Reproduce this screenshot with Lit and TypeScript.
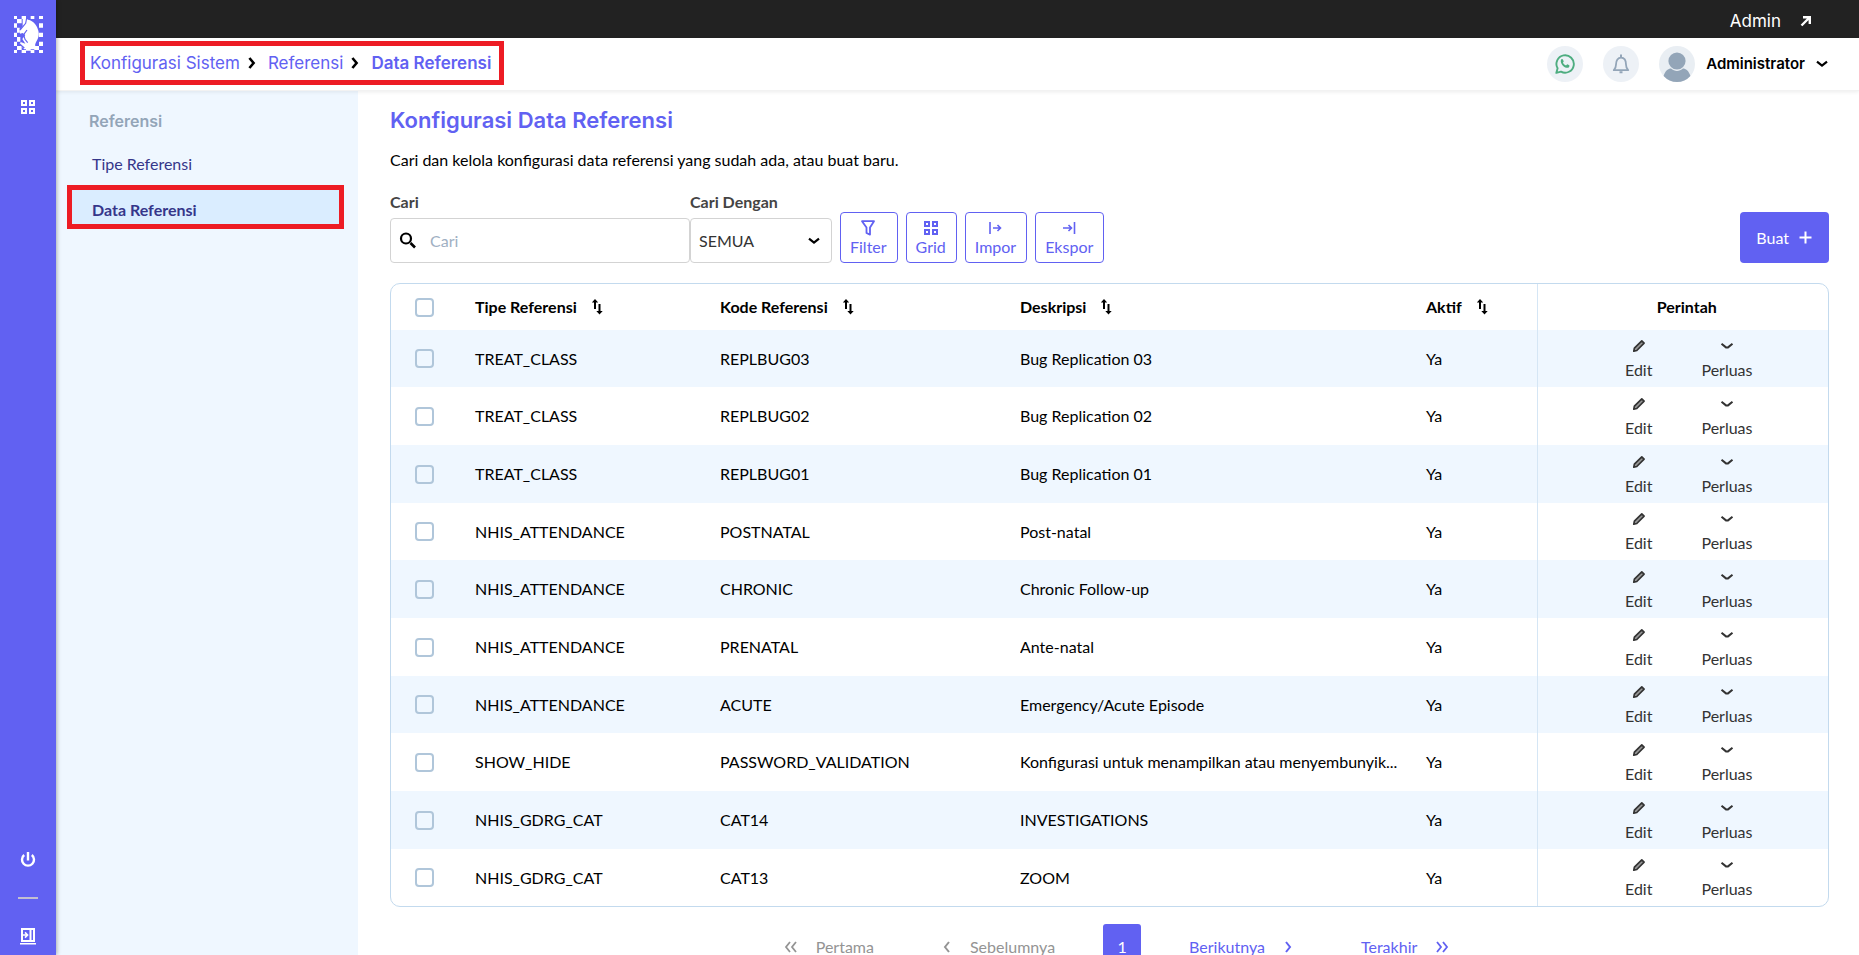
import { LitElement, html, css, svg } from "lit";
import { customElement, state } from "lit/decorators.js";

interface Reference {
  type: string;
  code: string;
  description: string;
  active: string;
}

const REFERENCES: Reference[] = [
  { type: "TREAT_CLASS", code: "REPLBUG03", description: "Bug Replication 03", active: "Ya" },
  { type: "TREAT_CLASS", code: "REPLBUG02", description: "Bug Replication 02", active: "Ya" },
  { type: "TREAT_CLASS", code: "REPLBUG01", description: "Bug Replication 01", active: "Ya" },
  { type: "NHIS_ATTENDANCE", code: "POSTNATAL", description: "Post-natal", active: "Ya" },
  { type: "NHIS_ATTENDANCE", code: "CHRONIC", description: "Chronic Follow-up", active: "Ya" },
  { type: "NHIS_ATTENDANCE", code: "PRENATAL", description: "Ante-natal", active: "Ya" },
  { type: "NHIS_ATTENDANCE", code: "ACUTE", description: "Emergency/Acute Episode", active: "Ya" },
  {
    type: "SHOW_HIDE",
    code: "PASSWORD_VALIDATION",
    description: "Konfigurasi untuk menampilkan atau menyembunyik...",
    active: "Ya",
  },
  { type: "NHIS_GDRG_CAT", code: "CAT14", description: "INVESTIGATIONS", active: "Ya" },
  { type: "NHIS_GDRG_CAT", code: "CAT13", description: "ZOOM", active: "Ya" },
];

const icon = (width: number, height: number, body: unknown) =>
  html`<svg class="icon" width=${width} height=${height} viewBox="0 0 ${width} ${height}" fill="none" stroke="currentColor" aria-hidden="true">${body}</svg>`;

const gridIcon = () =>
  icon(16, 16, svg`<path stroke-width="2" d="M2 2h4v4H2zM10 2h4v4h-4zM2 10h4v4H2zM10 10h4v4h-4z"/>`);
const powerIcon = () =>
  icon(16, 16, svg`<path stroke-width="2.4" d="M8 0v8.500M4.200 3a6 6 0 1 0 7.600 0"/>`);
const panelIcon = () =>
  icon(16, 17, svg`<path stroke-width="2" d="M2 1h12v12H2zM10.500 1v12"/><path stroke-width="1.600" d="M3 7h5M5 4.400L7.600 7 5 9.600M0 15.800h16"/>`);
const crumbIcon = () => icon(8, 12, svg`<path stroke-width="2.6" d="M1.4 1L5.6 6l-4.2 5"/>`);
const openIcon = () => icon(12, 12, svg`<path stroke-width="2.4" d="M1.5 10.5L9 3M3 2.2h6.8V9"/>`);
const caretIcon = () => icon(12, 8, svg`<path stroke-width="2.2" d="M1 1.6l5 4 5-4"/>`);
const thinCaretIcon = () =>
  icon(14, 8, svg`<path stroke-width="2" d="M1.500 1.800L6 5.400h2l4.500-3.600"/>`);
const searchIcon = () =>
  icon(18, 18, svg`<circle cx="7" cy="6.500" r="5" stroke-width="2.200"/><path stroke-width="2.600" d="M11.500 11L16 15.500"/>`);
const filterIcon = () =>
  icon(16, 16, svg`<path stroke-width="1.800" stroke-linejoin="round" d="M2 1.200h12L10 7.600v7L6.500 13V7.600z"/>`);
const importIcon = () => icon(14, 12, svg`<path stroke-width="1.600" d="M2 0v12M5 6h7.500M9.500 3l3 3-3 3"/>`);
const exportIcon = () => icon(14, 12, svg`<path stroke-width="1.600" d="M12.500 0v12M1 6h8.500M6.500 3l3 3-3 3"/>`);
const plusIcon = () => icon(13, 13, svg`<path stroke-width="2" d="M6.500 0.500v12M0.500 6.500h12"/>`);
const sortIcon = () =>
  icon(
    12,
    16,
    svg`<path stroke-width="2" d="M4 2v8M8.500 5v8"/><path fill="currentColor" stroke="none" d="M4 0l3.200 3.600H.8zM8.500 15.500l3.200-3.600H5.300z"/>`,
  );
const editIcon = () =>
  icon(
    14,
    14,
    svg`<path stroke-width="1.700" stroke-linejoin="round" fill="#999" d="M1.800 12.200l.6-3 7.400-7.300 2.300 2.200-7.300 7.400z"/>`,
  );
const leftIcon = () => icon(8, 12, svg`<path stroke-width="2" d="M6 1L2 6l4 5"/>`);
const rightIcon = () => icon(8, 12, svg`<path stroke-width="2" d="M2 1l4 5-4 5"/>`);
const firstIcon = () => icon(13, 12, svg`<path stroke-width="1.800" d="M6 1L2 6l4 5M12 1L8 6l4 5"/>`);
const lastIcon = () => icon(13, 12, svg`<path stroke-width="1.800" d="M1 1l4 5-4 5M7 1l4 5-4 5"/>`);
const bellIcon = () =>
  icon(
    18,
    20,
    svg`<path stroke-width="1.800" stroke-linejoin="round" d="M1.800 16.200c1.700-1.600 2.200-3 2.200-5.700C4 6.300 6 3.600 9 3.600s5 2.700 5 6.900c0 2.700.5 4.100 2.200 5.700z"/><path stroke-width="2" d="M9 .6v3M7.500 18.200h3"/>`,
  );
const whatsappIcon = () =>
  icon(
    20,
    20,
    svg`<path stroke-width="1.900" stroke-linejoin="round" d="M1.300 18.900l1.300-4.600A8.700 8.700 0 1 1 6 17.600z"/><path fill="currentColor" stroke="none" d="M6.200 5.600c.6-.7 1.500-.6 1.800.1l.7 1.600c.1.400-.6 1.100-.7 1.400.7 1.300 1.700 2.200 3.100 2.700.4-.2.900-1.200 1.300-1.100l1.800.9c.5.300.2 1.700-.5 2.200-1.300 1-3.600.2-5.300-1.200C6.500 10.700 5 7.500 6.200 5.600z"/>`,
  );
const avatarIcon = () => html`
  <svg class="icon" width="36" height="36" viewBox="0 0 36 36" aria-hidden="true">
    <circle cx="18" cy="18" r="18" fill="#e9eef3" />
    <circle cx="18" cy="15" r="8.600" fill="#93a5b8" />
    <path fill="#93a5b8" d="M4.600 30C6 25 9.500 22.600 12 22.600c3.500 3.200 8.500 3.200 12 0 2.500 0 6 2.400 7.400 7.400A18 18 0 0 1 4.600 30z" />
  </svg>
`;
const logoIcon = () => html`
  <svg class="icon" width="29" height="37" viewBox="0 0 87 111" aria-hidden="true">
    <path
      fill="#fff"
      d="M0 0h9v9H0zM23 0h13v9H23zM50 0h11v9H50zM75 0h12v9H75zM0 22h9v13H0zM75 22h12v13H75zM0 50h9v13H0zM75 50h12v13H75zM0 77h9v13H0zM75 77h12v13H75zM0 102h9v9H0zM23 102h13v9H23zM50 102h11v9H50zM75 102h12v9H75zM9 9h14v13H9zM9 35h8v15H9zM9 63h10v14H9zM9 90h14v12H9zM36 94h14v10H36zM61 90h14v12H61z"
    />
    <path
      fill="#fff"
      d="M26 8h12l4 3c18 4 25 16 29 27 8 20 0 30-5 41-5 9-2 16 3 21H31C24 92 20 88 17 84l3-6 14 5-9-14 9-12-8-6-8 2-2-8 10-14z"
    />
    <path fill="none" stroke="#6161f2" stroke-width="3.500" d="M38 6l-3 16L18 42M39 42l-10 14 4 14 8 10M17 84l14 12" />
  </svg>
`;

@customElement("app-root")
export class AppRoot extends LitElement {
  @state() private selected = new Set<string>();

  static styles = css`
    :host {
      --brand: #6161f2;
      --heading-font: Inter, "Noto Sans", sans-serif;
      display: block;
      height: 100vh;
      overflow: hidden;
      background: #fff;
      color: #000;
      font: 16px/20px Lato, "Liberation Sans", sans-serif;
    }
    * {
      box-sizing: border-box;
    }
    a {
      color: inherit;
      text-decoration: none;
    }
    button,
    input,
    select {
      font: inherit;
      color: inherit;
      margin: 0;
    }
    button {
      cursor: pointer;
      background: none;
      border: 0;
      padding: 0;
    }
    .icon {
      display: block;
      flex: none;
    }
    .shell {
      display: grid;
      grid-template-columns: 56px minmax(0, 1fr);
      grid-template-rows: minmax(0, 1fr);
      height: 100%;
    }
    .rail {
      display: flex;
      flex-direction: column;
      align-items: center;
      padding: 16px 0 10px;
      background: var(--brand);
      color: #fff;
      box-shadow: 1px 0 4px rgba(0, 0, 0, 0.3);
      z-index: 2;
    }
    .rail-apps {
      margin-top: 46px;
    }
    .rail-bottom {
      display: flex;
      flex-direction: column;
      align-items: center;
      gap: 29px;
      margin-top: auto;
    }
    .rail-line {
      width: 20px;
      height: 2px;
      background: #c3bfd0;
    }
    .page {
      display: grid;
      grid-template-rows: 38px 53px minmax(0, 1fr);
      min-width: 0;
    }
    .topbar {
      display: flex;
      align-items: center;
      justify-content: flex-end;
      padding: 4px 47px 0 0;
      background: #222;
      color: #fff;
      font-family: var(--heading-font);
    }
    .admin-link {
      display: flex;
      align-items: center;
      gap: 19px;
      font-size: 17px;
    }
    .header {
      display: flex;
      align-items: flex-start;
      justify-content: space-between;
      padding: 3px 31px 0 24px;
      background: #fff;
      border-bottom: 1px solid #f2f2f2;
      box-shadow: 0 1px 4px rgba(0, 0, 0, 0.08);
      font-family: var(--heading-font);
      z-index: 1;
    }
    .breadcrumb {
      display: flex;
      align-items: center;
      gap: 8px;
      height: 44px;
      padding: 0 8px 0 5px;
      border: 5px solid #ed1c24;
      color: var(--brand);
      font-size: 17px;
    }
    .breadcrumb .icon {
      color: #000;
      margin-right: 4px;
    }
    .breadcrumb .current {
      font-weight: 600;
    }
    .tools {
      display: flex;
      align-items: center;
      gap: 20px;
      height: 46px;
    }
    .round {
      display: grid;
      place-items: center;
      width: 36px;
      height: 36px;
      border-radius: 50%;
      background: #edf1f6;
    }
    .whatsapp {
      color: #4ead80;
    }
    .bell {
      color: #93a5b8;
    }
    .profile {
      display: flex;
      align-items: center;
      gap: 11px;
      font-size: 15px;
      font-weight: 600;
    }
    .body {
      display: grid;
      grid-template-columns: 302px minmax(0, 1fr);
      grid-template-rows: minmax(0, 1fr);
      min-height: 0;
    }
    .menu {
      padding: 20px 14px 0 11px;
      background: #eff7ff;
      color: #35368a;
    }
    .menu-title {
      margin: 0 0 13px;
      padding-left: 22px;
      color: #93a5b8;
      font: 600 16px/20px var(--heading-font);
    }
    .menu-item {
      display: flex;
      align-items: center;
      height: 40px;
      padding-left: 25px;
    }
    .menu-item.active {
      height: 44px;
      margin-top: 1px;
      padding: 6px 0 0 20px;
      border: 5px solid #ed1c24;
      background: #daedff;
      font-weight: 700;
    }
    .content {
      padding: 15px 30px 0 32px;
      min-width: 0;
      overflow: hidden;
    }
    .title {
      margin: 0;
      color: var(--brand);
      font: 600 22px/28px var(--heading-font);
    }
    .lead {
      margin: 16px 0 22px;
    }
    .toolbar {
      display: flex;
      align-items: flex-end;
      gap: 8px;
    }
    .search {
      display: flex;
    }
    .field {
      display: flex;
      flex-direction: column;
      gap: 6px;
      color: #444;
    }
    .field-label {
      font-weight: 700;
    }
    .control {
      display: flex;
      align-items: center;
      height: 45px;
      border: 1px solid #d3d3d3;
      border-radius: 4px;
      color: #000;
    }
    .search-control {
      width: 300px;
      gap: 5px;
      padding-left: 8px;
    }
    .select-control {
      width: 142px;
      padding-right: 11px;
    }
    .search-input {
      flex: 1;
      min-width: 0;
      border: 0;
      padding: 0 8px;
      background: none;
      outline: none;
    }
    .search-input::placeholder {
      color: #9fb0c3;
      opacity: 1;
    }
    .select-input {
      flex: 1;
      min-width: 0;
      height: 100%;
      padding: 0 8px;
      appearance: none;
      border: 0;
      background: none;
      color: #333;
      outline: none;
    }
    .tool {
      display: flex;
      flex-direction: column;
      align-items: center;
      justify-content: center;
      gap: 1px;
      height: 51px;
      padding: 1px 10px 0 9px;
      border: 1px solid var(--brand);
      border-radius: 4px;
      color: var(--brand);
    }
    .tool-icon {
      display: grid;
      place-items: center;
      height: 16px;
    }
    .create {
      display: flex;
      align-items: center;
      gap: 10px;
      height: 51px;
      margin-left: auto;
      padding: 0 17px 0 16px;
      border-radius: 4px;
      background: var(--brand);
      color: #fff;
    }
    .table-box {
      margin-top: 20px;
      border: 1px solid #c3daee;
      border-radius: 10px;
      overflow: hidden;
    }
    .table {
      width: 100%;
      border-collapse: collapse;
      table-layout: fixed;
    }
    .col-check {
      width: 84px;
    }
    .col-type {
      width: 245px;
    }
    .col-code {
      width: 300px;
    }
    .col-active {
      width: 111px;
    }
    .col-commands {
      width: 291px;
    }
    .table th {
      height: 46px;
      padding: 0;
      text-align: left;
      font-weight: 700;
    }
    .table td {
      height: 58px;
      padding: 0;
    }
    .table tbody tr:nth-child(3n + 1) td {
      height: 57px;
    }
    .table tbody tr:nth-child(odd) {
      background: #eff7ff;
    }
    .table .commands {
      border-left: 1px solid #d5e6f5;
      padding-left: 8px;
      text-align: center;
    }
    .sort {
      display: flex;
      align-items: center;
      gap: 14px;
      font-weight: 700;
    }
    .check {
      display: block;
      appearance: none;
      width: 19px;
      height: 19px;
      margin-left: 24px;
      border: 2px solid #b0c6da;
      border-radius: 4px;
    }
    .check:checked {
      background: var(--brand);
      border-color: var(--brand);
    }
    .clip {
      overflow: hidden;
      padding-right: 8px;
      text-overflow: ellipsis;
      white-space: nowrap;
    }
    .actions {
      display: flex;
      justify-content: center;
      gap: 49px;
      padding: 2px 0 0 4px;
      color: #333;
    }
    .action {
      display: flex;
      flex-direction: column;
      align-items: center;
      gap: 7px;
    }
    .action-icon {
      display: grid;
      place-items: center;
      height: 14px;
    }
    .pager {
      display: flex;
      justify-content: center;
      align-items: center;
      margin-top: 17px;
      padding-left: 14px;
      color: var(--brand);
    }
    .pager button {
      display: flex;
      align-items: center;
      gap: 19px;
    }
    .pager .off {
      color: #949494;
    }
    .pager-group {
      display: flex;
      gap: 69px;
    }
    .pager .page-number {
      justify-content: center;
      width: 38px;
      height: 46px;
      margin: 0 48px;
      border-radius: 3px;
      background: var(--brand);
      color: #fff;
    }
  `;

  private toggle(code: string) {
    const next = new Set(this.selected);
    next.has(code) ? next.delete(code) : next.add(code);
    this.selected = next;
  }

  private toggleAll() {
    const all = this.selected.size === REFERENCES.length;
    this.selected = new Set(all ? [] : REFERENCES.map((r) => r.code));
  }

  private renderSortHeader(label: string) {
    return html`<th scope="col"><button class="sort">${label} ${sortIcon()}</button></th>`;
  }

  private renderRow(row: Reference) {
    return html`
      <tr>
        <td>
          <input
            class="check"
            type="checkbox"
            aria-label=${row.code}
            .checked=${this.selected.has(row.code)}
            @change=${() => this.toggle(row.code)}
          />
        </td>
        <td>${row.type}</td>
        <td>${row.code}</td>
        <td><div class="clip">${row.description}</div></td>
        <td>${row.active}</td>
        <td class="commands">
          <div class="actions">
            <button class="action"><span class="action-icon">${editIcon()}</span>Edit</button>
            <button class="action"><span class="action-icon">${thinCaretIcon()}</span>Perluas</button>
          </div>
        </td>
      </tr>
    `;
  }

  private renderTool(label: string, glyph: unknown) {
    return html`<button class="tool"><span class="tool-icon">${glyph}</span>${label}</button>`;
  }

  render() {
    return html`
      <div class="shell">
        <nav class="rail" aria-label="Aplikasi">
          <a href="#" aria-label="Beranda">${logoIcon()}</a>
          <button class="rail-apps" aria-label="Modul">${gridIcon()}</button>
          <div class="rail-bottom">
            <button aria-label="Keluar">${powerIcon()}</button>
            <span class="rail-line"></span>
            <button aria-label="Buka panel">${panelIcon()}</button>
          </div>
        </nav>
        <div class="page">
          <div class="topbar">
            <a class="admin-link" href="#">Admin ${openIcon()}</a>
          </div>
          <header class="header">
            <nav class="breadcrumb" aria-label="Lokasi">
              <a href="#">Konfigurasi Sistem</a>${crumbIcon()}
              <a href="#">Referensi</a>${crumbIcon()}
              <a class="current" href="#" aria-current="page">Data Referensi</a>
            </nav>
            <div class="tools">
              <button class="round whatsapp" aria-label="WhatsApp">${whatsappIcon()}</button>
              <button class="round bell" aria-label="Notifikasi">${bellIcon()}</button>
              <button class="profile">${avatarIcon()}<span>Administrator</span>${caretIcon()}</button>
            </div>
          </header>
          <div class="body">
            <nav class="menu" aria-label="Referensi">
              <h2 class="menu-title">Referensi</h2>
              <a class="menu-item" href="#">Tipe Referensi</a>
              <a class="menu-item active" href="#" aria-current="page">Data Referensi</a>
            </nav>
            <main class="content">
              <h1 class="title">Konfigurasi Data Referensi</h1>
              <p class="lead">Cari dan kelola konfigurasi data referensi yang sudah ada, atau buat baru.</p>
              <div class="toolbar">
                <div class="search">
                  <div class="field">
                    <label class="field-label" for="search">Cari</label>
                    <div class="control search-control">
                      ${searchIcon()}
                      <input id="search" class="search-input" type="text" placeholder="Cari" />
                    </div>
                  </div>
                  <div class="field">
                    <label class="field-label" for="search-by">Cari Dengan</label>
                    <div class="control select-control">
                      <select id="search-by" class="select-input">
                        <option>SEMUA</option>
                      </select>
                      ${caretIcon()}
                    </div>
                  </div>
                </div>
                ${this.renderTool("Filter", filterIcon())} ${this.renderTool("Grid", gridIcon())}
                ${this.renderTool("Impor", importIcon())} ${this.renderTool("Ekspor", exportIcon())}
                <button class="create">Buat ${plusIcon()}</button>
              </div>
              <div class="table-box">
                <table class="table">
                  <colgroup>
                    <col class="col-check" />
                    <col class="col-type" />
                    <col class="col-code" />
                    <col />
                    <col class="col-active" />
                    <col class="col-commands" />
                  </colgroup>
                  <thead>
                    <tr>
                      <th scope="col">
                        <input
                          class="check"
                          type="checkbox"
                          aria-label="Pilih semua"
                          .checked=${this.selected.size === REFERENCES.length}
                          @change=${this.toggleAll}
                        />
                      </th>
                      ${this.renderSortHeader("Tipe Referensi")} ${this.renderSortHeader("Kode Referensi")}
                      ${this.renderSortHeader("Deskripsi")} ${this.renderSortHeader("Aktif")}
                      <th class="commands" scope="col">Perintah</th>
                    </tr>
                  </thead>
                  <tbody>
                    ${REFERENCES.map((row) => this.renderRow(row))}
                  </tbody>
                </table>
              </div>
              <nav class="pager" aria-label="Halaman">
                <div class="pager-group">
                  <button class="off" disabled>${firstIcon()}Pertama</button>
                  <button class="off" disabled>${leftIcon()}Sebelumnya</button>
                </div>
                <button class="page-number" aria-current="page">1</button>
                <div class="pager-group">
                  <button>Berikutnya ${rightIcon()}</button>
                  <button>Terakhir ${lastIcon()}</button>
                </div>
              </nav>
            </main>
          </div>
        </div>
      </div>
    `;
  }
}
